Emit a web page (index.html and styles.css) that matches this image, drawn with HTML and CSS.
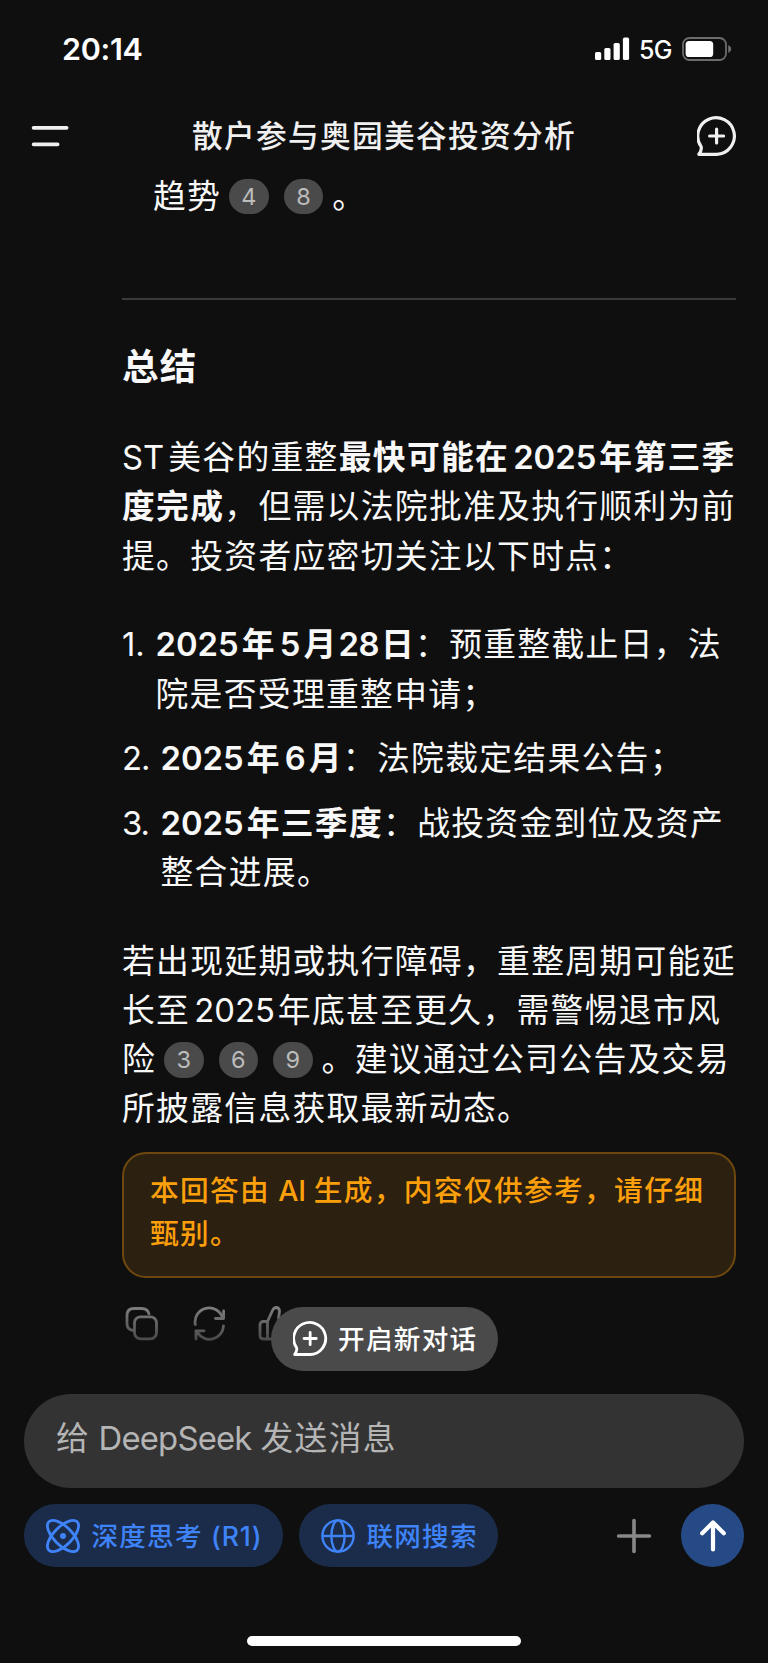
FILE: index.html
```html
<!doctype html>

<html lang="zh-CN">
<head>
    <meta charset="utf-8">
    <title>散户参与奥园美谷投资分析</title>
    <link rel="stylesheet" href="styles.css">
</head>

<body>
<div class="status">
    <span class="time">20:14</span>
    <div class="status-right">
        <svg width="36" height="24" viewBox="0 0 36 24" fill="#fff">
            <rect x="0" y="15" width="6.2" height="8" rx="1.6"/>
            <rect x="9.3" y="11" width="6.2" height="12" rx="1.6"/>
            <rect x="18.6" y="6" width="6.2" height="17" rx="1.6"/>
            <rect x="27.9" y="0.6" width="6.2" height="22.4" rx="1.6"/>
        </svg>
        <span class="net">5G</span>
        <svg width="50" height="24" viewBox="0 0 50 24">
            <rect x="1" y="1" width="43" height="22" rx="6.5" fill="none" stroke="#6c6c6c" stroke-width="1.8"/>
            <rect x="3.6" y="4" width="27.6" height="16" rx="3.6" fill="#fff"/>
            <path d="M46.2 8.2q3 1 3 3.8t-3 3.8z" fill="#6c6c6c"/>
        </svg>
    </div>
</div>

<header>
    <svg width="38" height="22" viewBox="0 0 38 22" stroke="#f0f0f0" stroke-width="3.8" stroke-linecap="round">
        <path d="M2.6 2.8h33M2.6 19.3h24"/>
    </svg>
    <h1>散户参与奥园美谷投资分析</h1>
    <svg width="40" height="40" viewBox="0 0 40 40" fill="none" stroke="#f0f0f0" stroke-width="3.2" stroke-linecap="round" stroke-linejoin="round">
        <path d="M19.6 38.3H1.8C3.8 35.6 5 33 4 30.4A18.3 18.3 0 1 1 19.6 38.3z"/>
        <path d="M19.6 13v14M12.600 20h14"/>
    </svg>
</header>

<main>
    <p class="tail">趋势<i class="ref">4</i><i class="ref">8</i><span class="stop">。</span></p>
    <hr>
    <h2>总结</h2>
    <p><span class="st">ST</span>美谷的重整<b>最快可能在<span class="num">2025</span>年第三季<br>度完成</b>，但需以法院批准及执行顺利为前<br>提。投资者应密切关注以下时点：</p>
    <div class="list">
        <div class="item">
            <span class="mark first">1.</span>
            <p><b><span class="num start">2025</span>年<span class="num">5</span>月<span class="num day">28</span>日</b>：预重整截止日，法<br>院是否受理重整申请；</p>
        </div>
        <div class="item">
            <span class="mark">2.</span>
            <p><b><span class="num start">2025</span>年<span class="num">6</span>月</b>：法院裁定结果公告；</p>
        </div>
        <div class="item">
            <span class="mark">3.</span>
            <p><b><span class="num start">2025</span>年三季度</b>：战投资金到位及资产<br>整合进展。</p>
        </div>
    </div>
    <p>若出现延期或执行障碍，重整周期可能延<br>长至<span class="num">2025</span>年底甚至更久，需警惕退市风<br>险<i class="ref">3</i><i class="ref">6</i><i class="ref">9</i><span class="stop">。</span>建议通过公司公告及交易<br>所披露信息获取最新动态。</p>
    <div class="notice">本回答由 <span class="ai">AI</span> 生成，内容仅供参考，请仔细<br>甄别。</div>
    <div class="actions">
        <svg width="34" height="36" viewBox="0 0 34 36">
            <rect x="9.5" y="10.8" width="22" height="22" rx="6"/>
            <path d="M8.2 24.5C4.5 24 2 21.5 2 17.5V9.5Q2 2.500 9 2.500H16.500Q22.500 2.500 24 7.800"/>
        </svg>
        <svg width="34" height="36" viewBox="0 0 34 36">
            <path d="M2.300 18.500A14 14 0 0 1 29.500 12M30.600 5v7.500H22.500M30.500 20A14 14 0 0 1 4.500 26.500M3 33v-8.200h8"/>
        </svg>
        <svg class="like" width="36" height="36" viewBox="0 0 36 36">
            <path d="M9.500 15.500H5.500Q2 15.500 2 19V29.500Q2 33 5.500 33H9.500zM9.500 15.500L14.500 4.500Q15.800 1.500 18.500 1.500Q21.500 2 21.500 5.500L20.500 12.500H28Q32.500 13 32 17.500L30 29Q29 33 25 33H9.500"/>
        </svg>
    </div>
</main>

<footer>
    <button class="new-chat">
        <svg width="35" height="35" viewBox="0 0 40 40" fill="none" stroke="#fff" stroke-width="3.2" stroke-linecap="round" stroke-linejoin="round">
            <path d="M19.6 38.3H1.8C3.8 35.6 5 33 4 30.4A18.3 18.3 0 1 1 19.6 38.3z"/>
            <path d="M19.6 13v14M12.600 20h14"/>
        </svg>
        <span>开启新对话</span>
    </button>
    <div class="input">给<span class="brand">DeepSeek</span>发送消息</div>
    <div class="tools">
        <button class="chip think">
            <svg width="34" height="34" viewBox="0 0 34 34" fill="none" stroke="#3f83f8" stroke-width="2.8">
                <ellipse cx="17" cy="17" rx="20" ry="9.2" transform="rotate(45 17 17)"/>
                <ellipse cx="17" cy="17" rx="20" ry="9.2" transform="rotate(-45 17 17)"/>
                <circle cx="17" cy="17" r="3" fill="#3f83f8" stroke="none"/>
            </svg>
            <span>深度思考 <span class="r1">(R1)</span></span>
        </button>
        <button class="chip search">
            <svg width="34" height="34" viewBox="0 0 34 34" fill="none" stroke="#3f83f8" stroke-width="2.4">
                <circle cx="17" cy="17" r="15.6"/>
                <ellipse cx="17" cy="17" rx="6.6" ry="15.6"/>
                <path d="M1.4 17h31.2"/>
            </svg>
            <span>联网搜索</span>
        </button>
        <svg class="plus" width="36" height="36" viewBox="0 0 36 36" stroke="#888" stroke-width="3.6" stroke-linecap="round">
            <path d="M18 2.6v30.8M2.6 18h30.8"/>
        </svg>
        <button class="send">
            <svg width="30" height="34" viewBox="0 0 30 34" fill="none" stroke="#fff" stroke-width="4.2" stroke-linecap="round" stroke-linejoin="round">
                <path d="M15 30.5V3.5M4.2 14.2L15 3.5L25.8 14.2"/>
            </svg>
        </button>
    </div>
    <div class="home-bar"></div>
</footer>
</body>
</html>
```

FILE: styles.css
```css
* {
    box-sizing: border-box;
}
body {
    margin: 0;
    height: 1663px;
    display: flex;
    flex-direction: column;
    background: #0f0f0f;
    color: #f8f8f8;
    font-family: Inter, "Noto Sans CJK SC", sans-serif;
    font-size: 32.8px;
    line-height: 49.2px;
    letter-spacing: 1.3px;
    white-space: nowrap;
}
h1, h2, p {
    margin: 0;
}
b {
    font-weight: 600;
}
button {
    border: 0;
    padding: 0;
    font-family: inherit;
    display: flex;
    align-items: center;
}
svg {
    display: block;
    flex: none;
}

.status {
    height: 93px;
    flex: none;
    display: flex;
    justify-content: space-between;
    align-items: flex-start;
    padding: 37px 36px 0 62px;
    color: #fff;
    line-height: 24px;
}
.time {
    font-size: 30.5px;
    font-weight: 600;
    letter-spacing: -0.3px;
}
.status-right {
    display: flex;
}
.net {
    width: 51px;
    padding: 1px 0 0 8px;
    font-size: 25px;
    font-weight: 500;
    letter-spacing: -0.8px;
}

header {
    height: 86px;
    flex: none;
    display: flex;
    align-items: center;
    justify-content: space-between;
    padding: 0 31px;
}
header h1 {
    padding-left: 2px;
    font-size: 30.7px;
    font-weight: 500;
    color: #f0f0f0;
}

main {
    flex: 1;
    min-height: 0;
    padding: 0 32px 0 122px;
}
.tail {
    height: 35px;
    padding-left: 31px;
    line-height: 34px;
}
.ref {
    display: inline-flex;
    align-items: center;
    justify-content: center;
    width: 39.5px;
    height: 35.5px;
    margin: -4px 7px -4px 8px;
    border-radius: 18px;
    background: #4a4a4a;
    color: #bcbcbc;
    font-size: 23.5px;
    font-style: normal;
    line-height: 36px;
    letter-spacing: 0;
    vertical-align: middle;
    position: relative;
    top: -2.5px;
}
.stop {
    margin-left: 2px;
    margin-right: -1px;
}
hr {
    height: 2px;
    border: 0;
    margin: 84px 0 43px;
    background: #3a3a3a;
}
h2 {
    font-size: 36.5px;
    font-weight: 600;
    margin-bottom: 41px;
}
.num {
    margin: 0 3px 0 4px;
    letter-spacing: 0;
}
.num.start {
    margin-left: 0;
}
.num.day {
    margin: 0 2px 0 1px;
    letter-spacing: -0.5px;
}
.st {
    margin-right: 4px;
    letter-spacing: 0;
}
.list {
    display: flex;
    flex-direction: column;
    gap: 15.5px;
    margin: 39.5px 0;
}
.item {
    display: flex;
}
.mark {
    width: 38.5px;
    letter-spacing: -1px;
}
.mark.first {
    width: 33.5px;
    letter-spacing: 0;
}
.notice {
    height: 126px;
    margin-top: 18.5px;
    padding: 14.5px 26px;
    border: 2px solid #6d480e;
    border-radius: 24px;
    background: #2c2011;
    color: #fb9f0b;
    font-size: 28.7px;
    font-weight: 500;
    line-height: 43px;
    letter-spacing: 1.35px;
    word-spacing: -1px;
}
.ai {
    letter-spacing: -0.3px;
}
.actions {
    display: flex;
    gap: 34px;
    margin-top: 27.5px;
    padding-left: 2.5px;
}
.actions svg {
    fill: none;
    stroke: #929292;
    stroke-width: 2.8;
    stroke-linejoin: round;
    stroke-linecap: round;
}
.actions .like {
    margin-left: -3px;
}

footer {
    flex: none;
    position: relative;
    height: 269px;
    padding: 0 24px;
}
/* fades the message out above the input */
footer::before {
    content: "";
    position: absolute;
    left: 0;
    right: 0;
    top: -100px;
    height: 84px;
    background: linear-gradient(rgba(15, 15, 15, 0), #0f0f0f);
}
.new-chat {
    position: absolute;
    left: 270.5px;
    top: -87px;
    width: 227.5px;
    height: 63.5px;
    gap: 10.5px;
    padding-left: 22px;
    border-radius: 32px;
    background: #4a4a4a;
    color: #fff;
    font-size: 26.6px;
    font-weight: 500;
    letter-spacing: 1.3px;
}
.new-chat span, .chip > span {
    padding-bottom: 3px;
}
.input {
    height: 94px;
    padding: 20px 32px;
    border-radius: 47px;
    background: #333;
    color: #b5b5b5;
}
.brand {
    margin: 0 9px 0 8.5px;
    letter-spacing: -0.8px;
}
.tools {
    display: flex;
    align-items: center;
    height: 63px;
    margin-top: 16px;
}
.chip {
    height: 63px;
    padding-left: 22px;
    gap: 11.5px;
    border-radius: 32px;
    background: #1b2c4a;
    color: #3f83f8;
    font-size: 26.6px;
    font-weight: 500;
    letter-spacing: 1.2px;
}
.chip svg {
    overflow: visible;
}
.think {
    width: 259px;
    margin-right: 16px;
}
.search {
    width: 199px;
}
.r1 {
    letter-spacing: 0.9px;
}
.plus {
    margin-left: auto;
    margin-right: 29px;
}
.send {
    width: 63px;
    height: 63px;
    justify-content: center;
    border-radius: 50%;
    background: #264a85;
}
.home-bar {
    width: 274px;
    height: 10px;
    margin: 69px auto 0;
    border-radius: 5px;
    background: #fff;
}
```
